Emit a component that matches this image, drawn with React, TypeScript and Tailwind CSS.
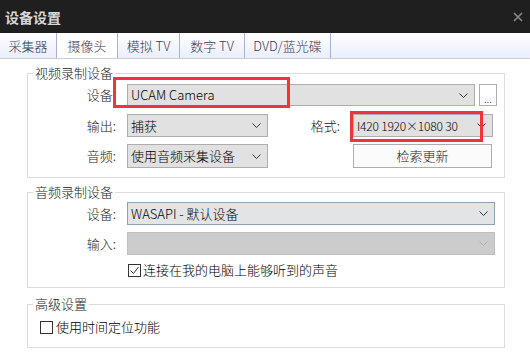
import React from 'react'

const font = "font-['Noto_Sans_CJK_SC','Microsoft_YaHei',sans-serif]"

const Chevron = ({ color = '#333' }: { color?: string }) => (
  <svg width="9" height="5" viewBox="0 0 9 5" className="shrink-0">
    <path d="M0.5 0.5 L4.5 4.5 L8.5 0.5" fill="none" stroke={color} strokeWidth="1" />
  </svg>
)

const Select = ({ value, w, focus, disabled, small }: { value: string; w: string; focus?: boolean; disabled?: boolean; small?: boolean }) => (
  <div
    className={`${w} h-full flex items-center justify-between pl-[3px] pr-[6px] border ${
      disabled ? 'bg-[#cccccc] border-[#bfbfbf]' : focus ? 'bg-[#e3e4e6] border-[#8ea2b6]' : 'bg-[#e1e1e1] border-[#adadad]'
    }`}
  >
    <span className={`${small ? 'text-[12px] tracking-[-0.2px]' : 'text-[13px]'} leading-[18px] text-black whitespace-nowrap`}>{value}</span>
    <Chevron color={disabled ? '#b0b0b0' : '#333'} />
  </div>
)

const Label = ({ text }: { text: string }) => (
  <div className="w-[89px] pr-[1px] text-right text-[13px] leading-[18px] text-[#222]">{text}</div>
)

const Group = ({ title, children, cls }: { title: string; children: React.ReactNode; cls: string }) => (
  <fieldset className={`border border-[#dcdcdc] ${cls}`}>
    <legend className="ml-[5px] px-[2px] text-[13px] leading-[18px] text-[#222]">{title}</legend>
    {children}
  </fieldset>
)

const Check = ({ checked }: { checked?: boolean }) => (
  <div className="w-[13px] h-[13px] border border-[#333] bg-white flex items-center justify-center shrink-0">
    {checked && (
      <svg width="11" height="11" viewBox="0 0 11 11">
        <path d="M1.5 5.5 L4.5 8.5 L9.5 2" fill="none" stroke="#333" strokeWidth="1" />
      </svg>
    )}
  </div>
)

const tabs = [
  { t: '采集器', w: 'w-[57px]' },
  { t: '摄像头', w: 'w-[61px]', active: true },
  { t: '模拟 TV', w: 'w-[62px]' },
  { t: '数字 TV', w: 'w-[65px]' },
  { t: 'DVD/蓝光碟', w: 'w-[86px]' },
]

export default function App() {
  return (
    <div className={`w-[530px] h-[359px] bg-white overflow-hidden font-light ${font}`}>
      {/* title bar */}
      <div className="h-[33px] bg-[#1f1f1f] flex items-center justify-between pl-[5px] pr-[6px]">
        <span className="text-[14px] font-bold text-[#d8d8d8] leading-[18px]">设备设置</span>
        <svg width="10" height="10" viewBox="0 0 10 10" className="mr-[1px]">
          <path d="M1 1 L9 9 M9 1 L1 9" stroke="#8a8a8a" strokeWidth="1.6" />
        </svg>
      </div>

      {/* tabs */}
      <div className="h-[26px] flex border-b border-[#c9cce0] bg-gradient-to-b from-white to-[#eaeefa]">
        {tabs.map((tab) => (
          <div
            key={tab.t}
            className={`${tab.w} h-full flex items-center justify-center border-r border-[#a9b0d6] text-[13px] leading-[18px] text-[#3a3a58] ${
              tab.active ? 'bg-white' : ''
            }`}
          >
            {tab.t}
          </div>
        ))}
      </div>

      <div className="ml-[27px] w-[478px] flex flex-col">
        <Group title="视频录制设备" cls="mt-[5px] pt-[2px] pb-[9px]">
          <div className="relative h-[22px] flex items-center">
            <Label text="设备:" />
            <div className="ml-[10px] h-full flex">
              <Select value="UCAM Camera" w="w-[348px]" />
            </div>
            <div className="ml-[4px] w-[18px] h-full bg-white border border-[#adadad] flex items-end justify-center pb-[3px]">
              <span className="text-[11px] leading-[8px] text-[#333]">...</span>
            </div>
            <div className="absolute left-[85px] top-[-7px] w-[177px] h-[31px] border-[3px] border-[#ee3636]" />
          </div>
          <div className="relative mt-[8px] h-[23px] flex items-center">
            <Label text="输出:" />
            <div className="ml-[10px] h-full flex">
              <Select value="捕获" w="w-[141px]" />
            </div>
            <div className="w-[72px] text-right text-[13px] leading-[18px] text-[#222]">格式:</div>
            <div className="ml-[13px] h-full flex">
              <Select value="I420 1920×1080 30" w="w-[140px]" small />
            </div>
            <div className="absolute left-[322px] top-[-3px] w-[133px] h-[31px] border-[3px] border-[#ee3636]" />
          </div>
          <div className="mt-[7px] h-[24px] flex items-center">
            <Label text="音频:" />
            <div className="ml-[10px] h-full flex">
              <Select value="使用音频采集设备" w="w-[141px]" />
            </div>
            <div className="ml-[85px] w-[139px] h-full bg-[#fbfbfb] border border-[#adadad] flex items-center justify-center text-[13px] leading-[18px] text-[#222]">
              检索更新
            </div>
          </div>
        </Group>

        <Group title="音频录制设备" cls="mt-[5px] pt-[1px] pb-[8px]">
          <div className="h-[23px] flex items-center">
            <Label text="设备:" />
            <div className="ml-[10px] h-full flex">
              <Select value="WASAPI - 默认设备" w="w-[368px]" focus />
            </div>
          </div>
          <div className="mt-[7px] h-[23px] flex items-center">
            <Label text="输入:" />
            <div className="ml-[10px] h-full flex">
              <Select value="" w="w-[368px]" disabled />
            </div>
          </div>
          <div className="mt-[6px] flex items-center pl-[100px]">
            <Check checked />
            <span className="ml-[2px] text-[13px] leading-[18px] text-black">连接在我的电脑上能够听到的声音</span>
          </div>
        </Group>

        <Group title="高级设置" cls="mt-[7px] pt-[5px] pb-[11px]">
          <div className="flex items-center pl-[12px]">
            <Check />
            <span className="ml-[3px] text-[13px] leading-[18px] text-black">使用时间定位功能</span>
          </div>
        </Group>
      </div>
    </div>
  )
}
